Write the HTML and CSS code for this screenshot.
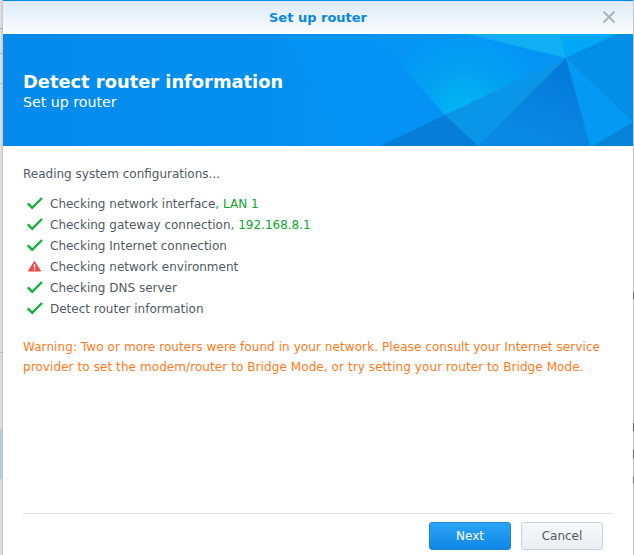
FILE: index.html
```html
<!DOCTYPE html>
<html lang="en">
<head>
<meta charset="utf-8">
<title>Set up router</title>
<link rel="stylesheet" href="styles.css">
</head>
<body>
<div class="backdrop"></div>
<div class="backdrop-right"></div>
<main class="window">
  <header class="titlebar">
    <span class="title">Set up router</span>
    <svg class="close" width="14" height="14" viewBox="0 0 14 14"><path d="M1.5 1.5l11 11M12.5 1.5l-11 11" stroke="#a9b2b9" stroke-width="1.8" fill="none"/></svg>
  </header>
  <section class="banner">
    <svg class="banner-art" width="630" height="112" viewBox="3 34 630 112">
      <defs>
        <linearGradient id="base" x1="0" y1="0" x2="1" y2="0"><stop offset="0" stop-color="#048bec"/><stop offset=".45" stop-color="#0490f0"/><stop offset="1" stop-color="#0498f2"/></linearGradient>
        <radialGradient id="mid" cx="465" cy="112" r="85" gradientUnits="userSpaceOnUse"><stop offset="0" stop-color="#02b9f3"/><stop offset=".5" stop-color="#03a2f2"/><stop offset="1" stop-color="#0495f4"/></radialGradient>
        <linearGradient id="dark" x1="566" y1="58" x2="530" y2="146" gradientUnits="userSpaceOnUse"><stop offset="0" stop-color="#0378d6"/><stop offset="1" stop-color="#0a8ae6"/></linearGradient>
      </defs>
      <rect x="3" y="34" width="630" height="112" fill="url(#base)"/>
      <polygon points="285,34 374,34 445,115 380,146 340,146" fill="#0493f4"/>
      <polygon points="374,34 467,34 566,58 445,115" fill="url(#mid)"/>
      <polygon points="467,34 560,34 566,58" fill="#12aef3"/>
      <polygon points="560,34 617,34 566,58" fill="#02a8f8"/>
      <polygon points="617,34 633,34 633,122 566,58" fill="#048fe6"/>
      <polygon points="566,58 633,122 593,146 590,146" fill="#0499f2"/>
      <polygon points="633,122 633,146 593,146" fill="#0783dc"/>
      <polygon points="566,58 590,146 478,146" fill="url(#dark)"/>
      <polygon points="445,115 566,58 478,146" fill="#0995e8"/>
      <polygon points="445,115 478,146 380,146" fill="#067ed9"/>
    </svg>
    <h1 class="banner-title">Detect router information</h1>
    <p class="banner-sub">Set up router</p>
  </section>
  <section class="content">
    <p class="status">Reading system configurations...</p>
    <ul class="checks">
      <li class="check"><svg class="icon" width="16" height="14" viewBox="0 0 16 14"><path d="M0.8 7.3L5.2 11.8L15 2" stroke="#12b23a" stroke-width="2.4" fill="none"/></svg><span>Checking network interface<em class="ok">, LAN 1</em></span></li>
      <li class="check"><svg class="icon" width="16" height="14" viewBox="0 0 16 14"><path d="M0.8 7.3L5.2 11.8L15 2" stroke="#12b23a" stroke-width="2.4" fill="none"/></svg><span>Checking gateway connection<em class="ok">, 192.168.8.1</em></span></li>
      <li class="check"><svg class="icon" width="16" height="14" viewBox="0 0 16 14"><path d="M0.8 7.3L5.2 11.8L15 2" stroke="#12b23a" stroke-width="2.4" fill="none"/></svg><span>Checking Internet connection</span></li>
      <li class="check"><svg class="icon" width="16" height="14" viewBox="0 0 16 14"><path d="M7.5 2.5L13.6 12H1.4z" fill="#f0474f" stroke="#f0474f" stroke-linejoin="round"/><path d="M7.5 5v3.8M7.5 9.6v1.6" stroke="#fff" stroke-width="1.3"/></svg><span>Checking network environment</span></li>
      <li class="check"><svg class="icon" width="16" height="14" viewBox="0 0 16 14"><path d="M0.8 7.3L5.2 11.8L15 2" stroke="#12b23a" stroke-width="2.4" fill="none"/></svg><span>Checking DNS server</span></li>
      <li class="check"><svg class="icon" width="16" height="14" viewBox="0 0 16 14"><path d="M0.8 7.3L5.2 11.8L15 2" stroke="#12b23a" stroke-width="2.4" fill="none"/></svg><span>Detect router information</span></li>
    </ul>
    <p class="warning">Warning: Two or more routers were found in your network. Please consult your Internet service provider to set the modem/router to Bridge Mode, or try setting your router to Bridge Mode.</p>
  </section>
  <footer class="footer">
    <button class="btn btn-primary" type="button">Next</button>
    <button class="btn btn-default" type="button">Cancel</button>
  </footer>
</main>
</body>
</html>
```
FILE: styles.css
```css
* { box-sizing: border-box; }
html, body { margin: 0; padding: 0; }
body {
  width: 634px;
  height: 555px;
  overflow: hidden;
  background: #d9d9d9;
  padding: 0 1px 0 3px;
  position: relative;
  font-family: "DejaVu Sans", "Liberation Sans", sans-serif;
  font-size: 12px;
  color: #505a64;
}
.backdrop {
  position: absolute;
  left: 0;
  top: 0;
  width: 3px;
  height: 555px;
  background:
    linear-gradient(transparent 28px, #aaa 28px, #aaa 29px, transparent 29px, transparent 53px, #aaa 53px, #aaa 54px, transparent 54px, transparent 83px, #bbb 83px, #bbb 84px, transparent 84px, transparent 352px, #bbb 352px, #bbb 353px, transparent 353px),
    linear-gradient(transparent 429px, #b5cbdd 429px, #b5cbdd 479px, transparent 479px),
    linear-gradient(90deg, #e4e4e4, #c6c6c6);
}
.backdrop-right {
  position: absolute;
  right: 0;
  top: 0;
  width: 1px;
  height: 555px;
  background: linear-gradient(#c4c4c4 292px, #666 292px, #666 299px, #c4c4c4 299px, #c4c4c4 423px, #666 423px, #666 431px, #c4c4c4 431px, #c4c4c4 450px, #666 450px, #666 458px, #c4c4c4 458px, #c4c4c4 477px, #777 477px, #777 483px, #c4c4c4 483px);
}
.window {
  width: 630px;
  height: 555px;
  background: #fff;
  display: flex;
  flex-direction: column;
  position: relative;
}
.titlebar {
  height: 34px;
  flex: none;
  border-top: 1px solid #0086e8;
  background: linear-gradient(#dcebf7, #fbfdfe);
  display: flex;
  align-items: center;
  justify-content: center;
}
.title { font-size: 13px; font-weight: 700; color: #0a87e4; }
.close { position: absolute; right: 17px; top: 10px; }
.banner {
  height: 112px;
  flex: none;
  position: relative;
  padding: 37px 20px 0;
  color: #fff;
}
.banner-art { position: absolute; left: 0; top: 0; }
.banner-title { position: relative; margin: 0; font-size: 17.85px; line-height: 22px; font-weight: 700; }
.banner-sub { position: relative; margin: 0; font-size: 14.2px; line-height: 18px; }
.content { flex: 1; padding: 20px 20px 0; }
.status { margin: 0 0 11px; line-height: 16px; }
.checks { list-style: none; margin: 0; padding: 0; }
.check { display: flex; align-items: center; height: 21px; }
.icon { flex: none; margin: 0 7px 0 4px; position: relative; top: -1px; }
.ok { font-style: normal; color: #0fa32e; }
.warning { margin: 18px 0 0; line-height: 20px; color: #ff7a1c; width: 590px; letter-spacing: .08px; }
.footer {
  height: 42px;
  flex: none;
  margin: 0 20px;
  border-top: 1px solid #e2e2e2;
  display: flex;
  justify-content: flex-end;
  align-items: flex-start;
  gap: 10px;
  padding: 8px 10px 0 0;
}
.btn {
  width: 82px;
  height: 28px;
  border-radius: 3px;
  font: 12px "DejaVu Sans", "Liberation Sans", sans-serif;
  padding: 0;
}
.btn-primary { color: #fff; background: linear-gradient(#2ba5f8, #0f87e6); border: 1px solid #1b86d8; }
.btn-default { color: #505a64; background: linear-gradient(#f6f8fb, #e9eef4); border: 1px solid #c7d2dd; }
```
